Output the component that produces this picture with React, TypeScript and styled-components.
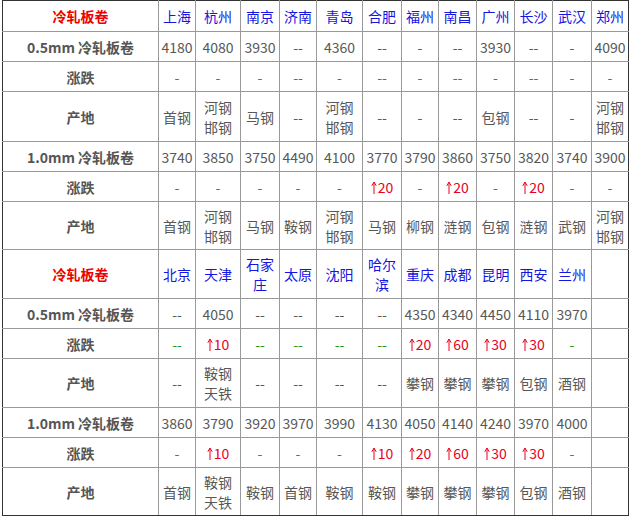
import React from 'react';
import styled, { createGlobalStyle } from 'styled-components';

const GlobalStyle = createGlobalStyle`
  body {
    margin: 0;
    background: #fff;
    font-family: "Noto Sans CJK SC", "Noto Sans", sans-serif;
  }
`;

const colWidths = [156, 37, 45, 39, 37, 46, 39, 37, 38, 38, 38, 39, 37];

type Kind = 'head' | 'price' | 'change' | 'origin';

type Row = {
  kind: Kind;
  label: string;
  height: number;
  cells: string[];
};

const rows: Row[] = [
  {
    kind: 'head',
    label: '冷轧板卷',
    height: 31,
    cells: ['上海', '杭州', '南京', '济南', '青岛', '合肥', '福州', '南昌', '广州', '长沙', '武汉', '郑州'],
  },
  {
    kind: 'price',
    label: '0.5mm 冷轧板卷',
    height: 30,
    cells: ['4180', '4080', '3930', '--', '4360', '--', '-', '--', '3930', '--', '-', '4090'],
  },
  {
    kind: 'change',
    label: '涨跌',
    height: 30,
    cells: ['-', '-', '-', '--', '-', '--', '-', '--', '-', '--', '-', '-'],
  },
  {
    kind: 'origin',
    label: '产地',
    height: 50,
    cells: ['首钢', '河钢邯钢', '马钢', '--', '河钢邯钢', '--', '-', '--', '包钢', '--', '-', '河钢邯钢'],
  },
  {
    kind: 'price',
    label: '1.0mm 冷轧板卷',
    height: 30,
    cells: ['3740', '3850', '3750', '4490', '4100', '3770', '3790', '3860', '3750', '3820', '3740', '3900'],
  },
  {
    kind: 'change',
    label: '涨跌',
    height: 30,
    cells: ['-', '-', '-', '-', '-', '↑20', '-', '↑20', '-', '↑20', '-', '-'],
  },
  {
    kind: 'origin',
    label: '产地',
    height: 48,
    cells: ['首钢', '河钢邯钢', '马钢', '鞍钢', '河钢邯钢', '马钢', '柳钢', '涟钢', '包钢', '涟钢', '武钢', '河钢邯钢'],
  },
  {
    kind: 'head',
    label: '冷轧板卷',
    height: 49,
    cells: ['北京', '天津', '石家庄', '太原', '沈阳', '哈尔滨', '重庆', '成都', '昆明', '西安', '兰州', ''],
  },
  {
    kind: 'price',
    label: '0.5mm 冷轧板卷',
    height: 30,
    cells: ['--', '4050', '--', '--', '--', '--', '4350', '4340', '4450', '4110', '3970', ''],
  },
  {
    kind: 'change',
    label: '涨跌',
    height: 30,
    cells: ['--', '↑10', '--', '--', '--', '--', '↑20', '↑60', '↑30', '↑30', '-', ''],
  },
  {
    kind: 'origin',
    label: '产地',
    height: 49,
    cells: ['--', '鞍钢天铁', '--', '--', '--', '--', '攀钢', '攀钢', '攀钢', '包钢', '酒钢', ''],
  },
  {
    kind: 'price',
    label: '1.0mm 冷轧板卷',
    height: 30,
    cells: ['3860', '3790', '3920', '3970', '3990', '4130', '4050', '4140', '4240', '3970', '4000', ''],
  },
  {
    kind: 'change',
    label: '涨跌',
    height: 30,
    cells: ['-', '↑10', '-', '-', '-', '↑10', '↑20', '↑60', '↑30', '↑30', '-', ''],
  },
  {
    kind: 'origin',
    label: '产地',
    height: 48,
    cells: ['首钢', '鞍钢天铁', '鞍钢', '首钢', '鞍钢', '鞍钢', '攀钢', '攀钢', '攀钢', '包钢', '酒钢', ''],
  },
];

const Page = styled.div`
  padding-left: 2px;
`;

const PriceTable = styled.table`
  border-collapse: collapse;
  table-layout: fixed;
  width: 627px;
  font-size: 14px;
  line-height: 20px;

  td {
    border: 1px solid #999;
    padding: 0 1px;
    text-align: center;
    vertical-align: middle;
    white-space: nowrap;
  }
  tr:first-child td {
    border-top-color: #333;
  }
  tr:last-child td {
    border-bottom-color: #333;
  }
  td:first-child {
    border-left-color: #333;
  }
  td:last-child {
    border-right-color: #333;
  }
`;

const TableRow = styled.tr<{ $height: number }>`
  height: ${(p) => p.$height}px;
`;

const TitleCell = styled.td`
  color: #e00;
  font-weight: bold;
`;

const LabelCell = styled.td`
  color: #555;
  font-weight: bold;
`;

const CityCell = styled.td`
  color: #1515e0;
`;

const ValueCell = styled.td<{ $tone: 'gray' | 'green' | 'red' }>`
  color: ${(p) => (p.$tone === 'red' ? '#e8001c' : p.$tone === 'green' ? '#1f9a1f' : '#585858')};
`;

const Arrow = styled.svg`
  width: 6px;
  height: 13px;
  margin-right: 1px;
  vertical-align: -1px;
`;

const UpArrow: React.FC = () => (
  <Arrow viewBox="0 0 6 13">
    <path d="M3 1.5 L3 13" stroke="currentColor" strokeWidth="1" fill="none" />
    <path d="M0.8 4.8 L3 1 L5.2 4.8" stroke="currentColor" strokeWidth="1" fill="none" />
  </Arrow>
);

const splitLines = (text: string) =>
  text.length === 4 || text.length === 3 ? (
    <>
      {text.slice(0, 2)}
      <br />
      {text.slice(2)}
    </>
  ) : (
    text
  );

const renderCell = (kind: Kind, text: string, key: number) => {
  if (kind === 'head') {
    return <CityCell key={key}>{splitLines(text)}</CityCell>;
  }
  if (kind === 'change') {
    if (text.startsWith('↑')) {
      return (
        <ValueCell key={key} $tone="red">
          <UpArrow />
          {text.slice(1)}
        </ValueCell>
      );
    }
    return (
      <ValueCell key={key} $tone="green">
        {text}
      </ValueCell>
    );
  }
  if (kind === 'origin') {
    return (
      <ValueCell key={key} $tone="gray">
        {text.length === 4 ? splitLines(text) : text}
      </ValueCell>
    );
  }
  return (
    <ValueCell key={key} $tone="gray">
      {text}
    </ValueCell>
  );
};

const App: React.FC = () => (
  <Page>
    <GlobalStyle />
    <PriceTable>
      <colgroup>
        {colWidths.map((w, i) => (
          <col key={i} style={{ width: w }} />
        ))}
      </colgroup>
      <tbody>
        {rows.map((row, r) => (
          <TableRow key={r} $height={row.height}>
            {row.kind === 'head' ? (
              <TitleCell>{row.label}</TitleCell>
            ) : (
              <LabelCell>{row.label}</LabelCell>
            )}
            {row.cells.map((c, i) => renderCell(row.kind, c, i))}
          </TableRow>
        ))}
      </tbody>
    </PriceTable>
  </Page>
);

export default App;
